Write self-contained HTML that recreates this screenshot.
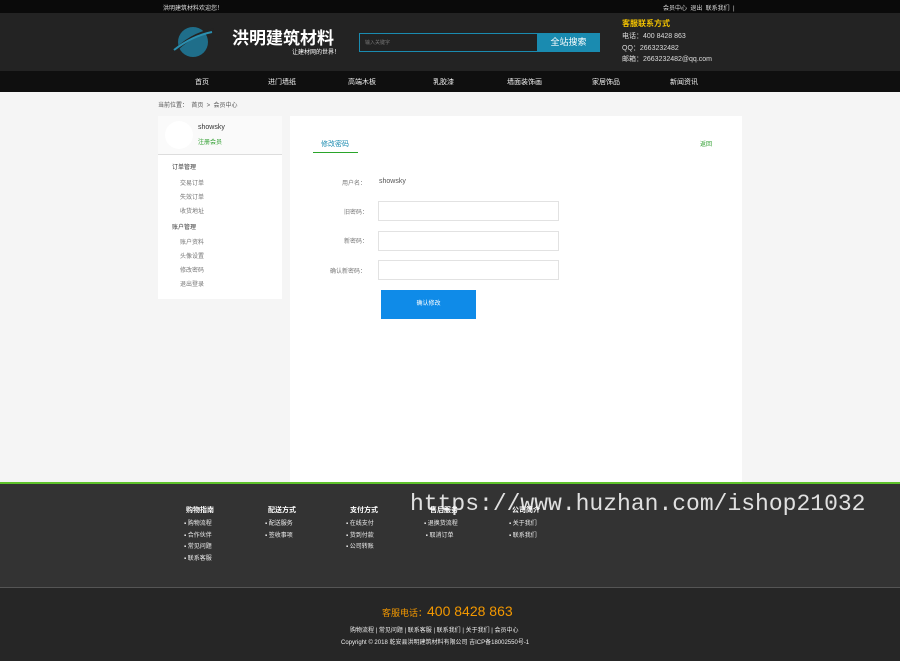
<!DOCTYPE html>
<html><head><meta charset="utf-8"><style>
*{margin:0;padding:0;box-sizing:border-box}
body{width:900px;height:661px;overflow:hidden;background:#f5f5f5;font-family:"Liberation Sans","Noto Sans CJK SC",sans-serif;font-size:7px;color:#333;position:relative}
.a{position:absolute;white-space:nowrap}
</style></head><body>
<div class="a" style="left:0;top:0;width:900px;height:13px;background:#0a0a0a"></div>
<div class="a" style="left:163px;top:3px;color:#ddd;font-size:6px">洪明建筑材料欢迎您！</div>
<div class="a" style="left:663px;top:3px;color:#ddd;font-size:6px">会员中心 &nbsp;退出 &nbsp;联系我们 &nbsp;|</div>
<div class="a" style="left:0;top:13px;width:900px;height:58px;background:#232323"></div>
<svg class="a" style="left:170px;top:24px" width="46" height="36" viewBox="0 0 46 36"><ellipse cx="23" cy="18" rx="15" ry="15" fill="#1f6e8a"/><path d="M2 30 Q20 10 44 6" stroke="#232323" stroke-width="3" fill="none"/><path d="M4 26 Q22 12 42 8" stroke="#2b8fb0" stroke-width="2" fill="none"/></svg>
<div class="a" style="left:232px;top:24px;color:#fff;font-size:17px;font-weight:bold">洪明建筑材料</div>
<div class="a" style="left:292px;top:47px;color:#fff;font-size:6px">让建材网的世界！</div>
<div class="a" style="left:359px;top:33px;width:180px;height:19px;border:1px solid #1a8bb0;background:#222"></div>
<div class="a" style="left:365px;top:39px;color:#777;font-size:5px">输入关键字</div>
<div class="a" style="left:537px;top:33px;width:63px;height:19px;background:#1a8bb0;color:#fff;font-size:9px;text-align:center;line-height:19px">全站搜索</div>
<div class="a" style="left:622px;top:18px;color:#f5c400;font-size:8px;font-weight:bold">客服联系方式</div>
<div class="a" style="left:622px;top:31px;color:#ddd;font-size:7px;line-height:11.5px">电话：400 8428 863<br>QQ：2663232482<br>邮箱：2663232482@qq.com</div>
<div class="a" style="left:0;top:71px;width:900px;height:21px;background:#0f0f0f"></div>
<div class="a" style="top:77px;left:0;width:900px;color:#eee;font-size:7px">
<span class="a" style="left:195px">首页</span><span class="a" style="left:268px">进门墙纸</span><span class="a" style="left:348px">高端木板</span><span class="a" style="left:433px">乳胶漆</span><span class="a" style="left:507px">墙面装饰画</span><span class="a" style="left:592px">家居饰品</span><span class="a" style="left:670px">新闻资讯</span></div>
<div class="a" style="left:158px;top:100px;color:#555;font-size:6px">当前位置： &nbsp;首页 &nbsp;&gt; &nbsp;会员中心</div>
<div class="a" style="left:158px;top:116px;width:124px;height:183px;background:#fff"></div>
<div class="a" style="left:158px;top:116px;width:124px;height:39px;background:#fafafa;border-bottom:1px solid #ddd"></div>
<div class="a" style="left:165px;top:121px;width:28px;height:28px;border-radius:50%;background:#fff"></div>
<div class="a" style="left:198px;top:124px;color:#333;font-size:7px">showsky</div>
<div class="a" style="left:198px;top:137px;color:#2a9c2a;font-size:6px">注册会员</div>
<div class="a" style="left:172px;top:162px;color:#333;font-size:6px">订单管理</div>
<div class="a" style="left:180px;top:177px;color:#777;font-size:6px;line-height:14px">交易订单<br>失效订单<br>收货地址</div>
<div class="a" style="left:172px;top:222px;color:#333;font-size:6px">账户管理</div>
<div class="a" style="left:180px;top:236px;color:#777;font-size:6px;line-height:14px">账户资料<br>头像设置<br>修改密码<br>退出登录</div>
<div class="a" style="left:290px;top:116px;width:452px;height:366px;background:#fff"></div>
<div class="a" style="left:321px;top:139px;color:#1a8bb0;font-size:7px">修改密码</div>
<div class="a" style="left:313px;top:152px;width:45px;height:1px;background:#2aa52a"></div>
<div class="a" style="left:700px;top:139px;color:#2a9c2a;font-size:6px">返回</div>
<div class="a" style="left:342px;top:178px;color:#777;font-size:6px">用户名：</div>
<div class="a" style="left:379px;top:178px;color:#555;font-size:7px">showsky</div>
<div class="a" style="left:344px;top:207px;color:#777;font-size:6px">旧密码：</div>
<div class="a" style="left:378px;top:201px;width:181px;height:20px;border:1px solid #e2e2e2"></div>
<div class="a" style="left:344px;top:236px;color:#777;font-size:6px">新密码：</div>
<div class="a" style="left:378px;top:231px;width:181px;height:20px;border:1px solid #e2e2e2"></div>
<div class="a" style="left:330px;top:266px;color:#777;font-size:6px">确认新密码：</div>
<div class="a" style="left:378px;top:260px;width:181px;height:20px;border:1px solid #e2e2e2"></div>
<div class="a" style="left:381px;top:290px;width:95px;height:29px;background:#0f8be8;color:#fff;font-size:6px;text-align:center;line-height:29px">确认修改</div>
<div class="a" style="left:0;top:482px;width:900px;height:2px;background:#5ec22b"></div>
<div class="a" style="left:0;top:484px;width:900px;height:103px;background:#333"></div>
<div class="a" style="left:0;top:587px;width:900px;height:1px;background:#555"></div>
<div class="a" style="left:0;top:588px;width:900px;height:73px;background:#262626"></div>
<div class="a" style="left:186px;top:505px;color:#fff;font-size:7px;font-weight:bold">购物指南</div>
<div class="a" style="left:268px;top:505px;color:#fff;font-size:7px;font-weight:bold">配送方式</div>
<div class="a" style="left:350px;top:505px;color:#fff;font-size:7px;font-weight:bold">支付方式</div>
<div class="a" style="left:430px;top:505px;color:#fff;font-size:7px;font-weight:bold">售后服务</div>
<div class="a" style="left:512px;top:505px;color:#fff;font-size:7px;font-weight:bold">公司简介</div>
<div class="a" style="left:184px;top:519px;color:#eee;font-size:6px;line-height:11.5px">▪ 购物流程<br>▪ 合作伙伴<br>▪ 常见问题<br>▪ 联系客服</div>
<div class="a" style="left:265px;top:519px;color:#eee;font-size:6px;line-height:11.5px">▪ 配送服务<br>▪ 签收事项</div>
<div class="a" style="left:346px;top:519px;color:#eee;font-size:6px;line-height:11.5px">▪ 在线支付<br>▪ 货到付款<br>▪ 公司转账</div>
<div class="a" style="left:424px;top:519px;color:#eee;font-size:6px;line-height:11.5px">▪ 退换货流程<br>&nbsp;▪ 取消订单</div>
<div class="a" style="left:509px;top:519px;color:#eee;font-size:6px;line-height:11.5px">▪ 关于我们<br>▪ 联系我们</div>
<div class="a" style="left:410px;top:491px;color:#fff;font-family:'Liberation Mono',monospace;font-size:23px;opacity:.85">https://www.huzhan.com/ishop21032</div>
<div class="a" style="left:382px;top:603px;color:#f39800;font-size:9px">客服电话：<span style="font-size:14px">400 8428 863</span></div>
<div class="a" style="left:350px;top:625px;color:#eee;font-size:6px">购物流程 | 常见问题 | 联系客服 | 联系我们 | 关于我们 | 会员中心</div>
<div class="a" style="left:341px;top:637px;color:#eee;font-size:6px">Copyright © 2018 乾安县洪明建筑材料有限公司 吉ICP备18002550号-1</div>
</body></html>
